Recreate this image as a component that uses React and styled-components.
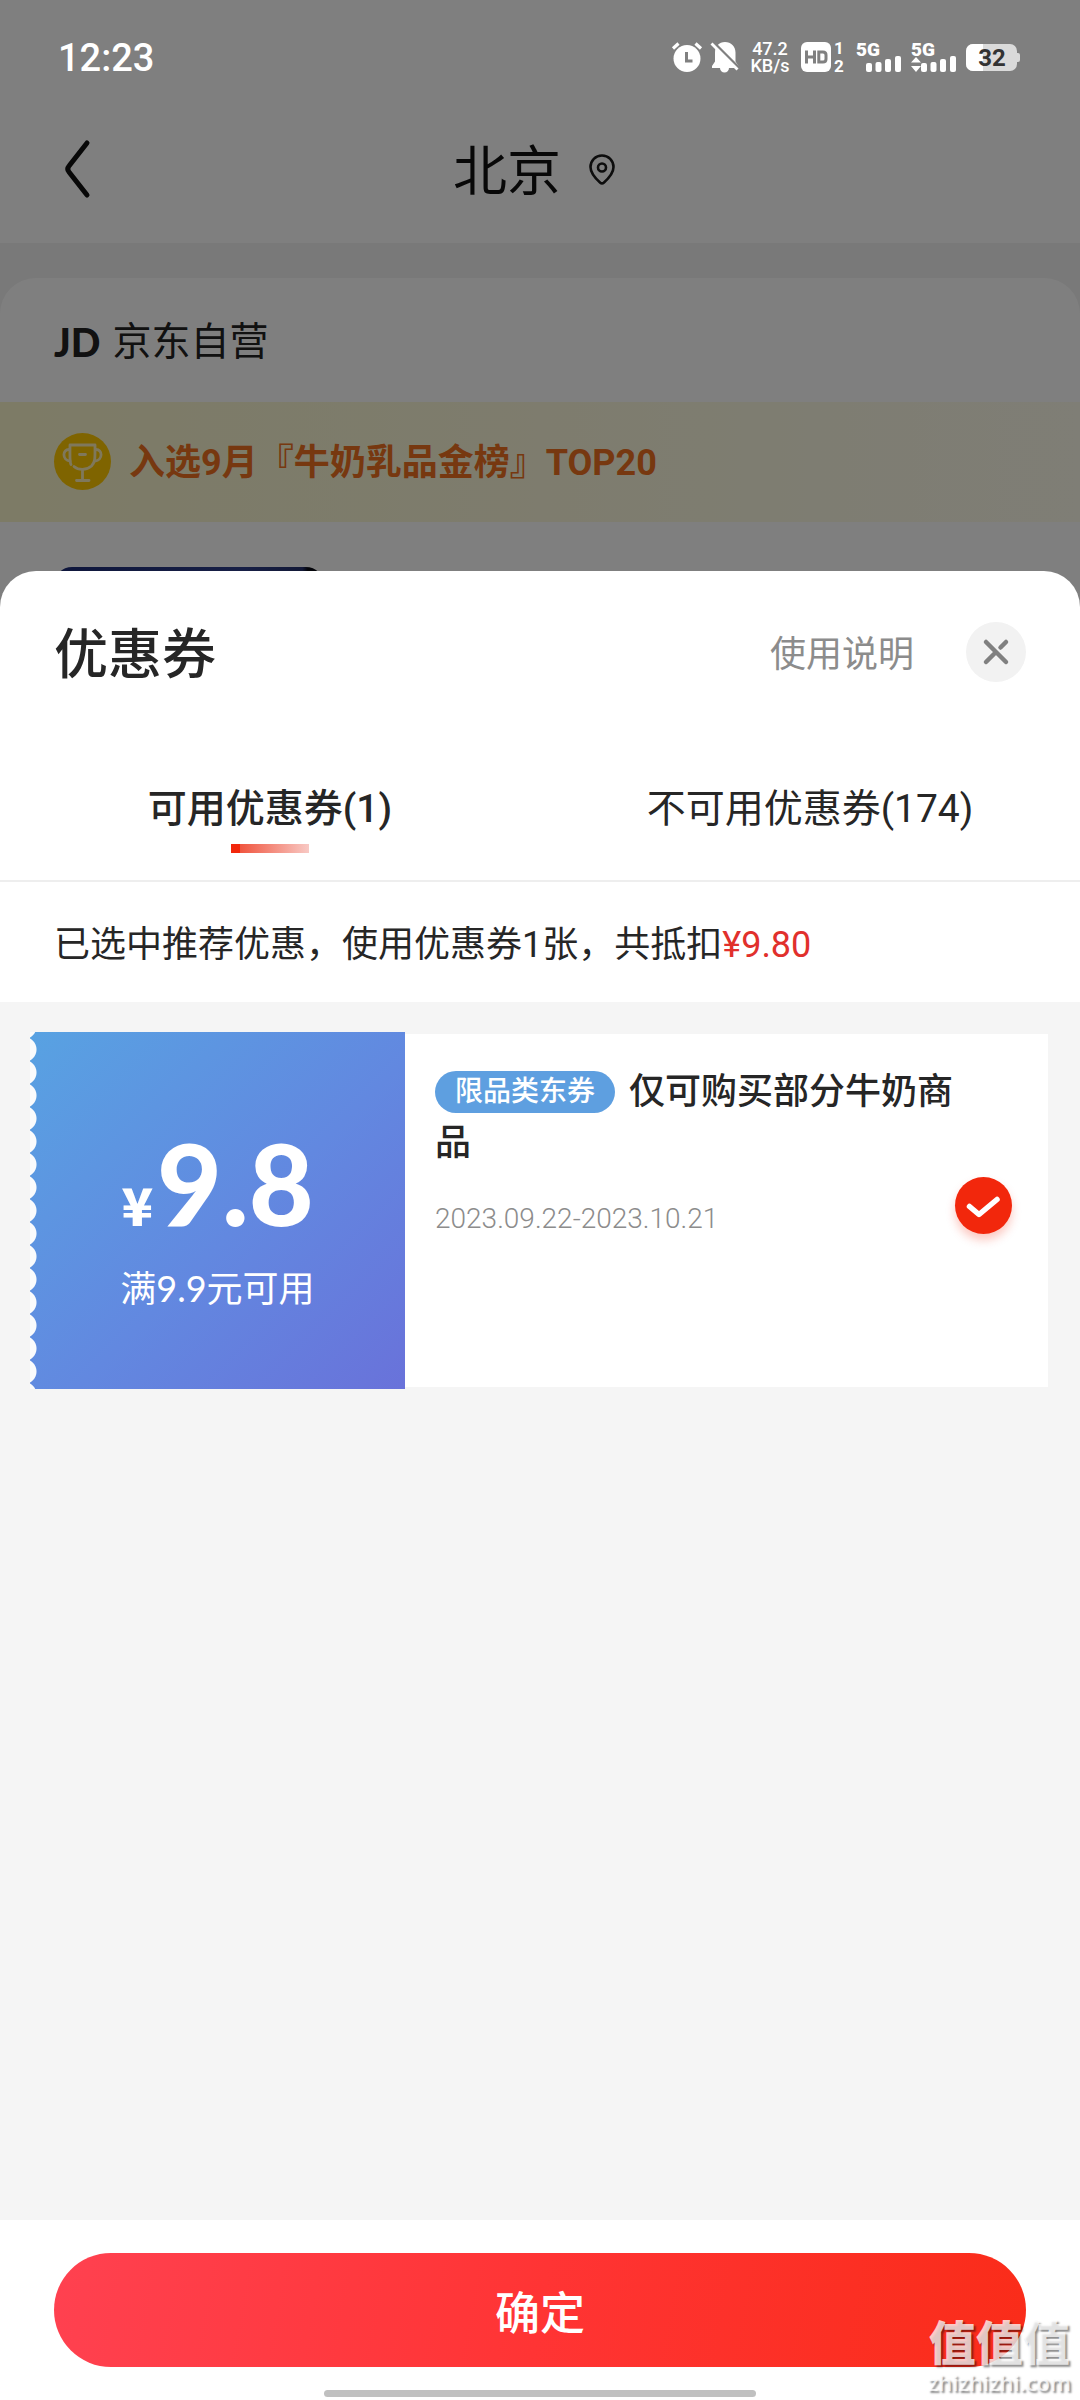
import React, { useState } from 'react';
import styled, { createGlobalStyle } from 'styled-components';

const GlobalStyle = createGlobalStyle`
  * {
    box-sizing: border-box;
  }

  body {
    margin: 0;
    background: #fff;
    color: #262626;
    font-family: Roboto, "Noto Sans CJK SC", sans-serif;
  }

  button {
    padding: 0;
    border: none;
    background: none;
    color: inherit;
    font: inherit;
    cursor: pointer;
  }

  svg {
    flex: none;
    overflow: visible;
  }
`;

const Screen = styled.div`
  position: relative;
  display: flex;
  flex-direction: column;
  min-height: 100vh;
`;

/* ---------- store page behind the sheet ---------- */

const StorePage = styled.div`
  position: relative;
  background: #f3f3f3;
`;

const Mask = styled.div`
  position: absolute;
  inset: 0;
  background: rgba(0, 0, 0, 0.5);
`;

const StatusBar = styled.div`
  position: relative;
  z-index: 1;
  display: flex;
  align-items: center;
  justify-content: space-between;
  height: 114px;
  padding: 0 60px 0 58px;
  color: #fff;
`;

const Clock = styled.time`
  padding-top: 2px;
  font-size: 38px;
  font-weight: 500;
  line-height: 48px;
`;

const StatusIcons = styled.div`
  display: flex;
  align-items: center;
  gap: 9px;
`;

const NetSpeed = styled.div`
  width: 44px;
  font-size: 18px;
  font-weight: 500;
  line-height: 17px;
  text-align: center;
`;

const TopArea = styled.div`
  background: #fff;
`;

const NavBar = styled.header`
  display: grid;
  grid-template-columns: 120px 1fr 120px;
  align-items: center;
  height: 129px;
  padding-bottom: 18px;
`;

const BackButton = styled.button`
  display: flex;
  padding-left: 64px;
`;

const City = styled.h1`
  display: flex;
  align-items: center;
  justify-content: center;
  gap: 28px;
  margin: 0;
  padding-right: 12px;
  color: #111;
  font-size: 54px;
  font-weight: 400;
  line-height: 72px;
`;

const CityName = styled.span`
  padding-top: 6px;
`;

const StoreCard = styled.section`
  margin-top: 35px;
  border-radius: 36px 36px 0 0;
  background: #fff;
`;

const StoreName = styled.h2`
  display: flex;
  align-items: center;
  gap: 12px;
  margin: 0;
  padding: 4px 54px 0;
  height: 124px;
  color: #222;
  font-size: 39px;
  font-weight: 400;
  line-height: 52px;
`;

const JdLogo = styled.span`
  font-family: Lato, sans-serif;
  font-weight: 900;
`;

const RankBanner = styled.div`
  display: flex;
  align-items: center;
  gap: 18px;
  height: 120px;
  padding: 0 54px 2px;
  background: linear-gradient(90deg, #faf6cc, #fefcec);
  color: #ee7020;
  font-size: 36px;
  font-weight: 700;
  line-height: 48px;
`;

const RankText = styled.span`
  padding-top: 4px;
`;

const ProductRow = styled.div`
  padding: 45px 54px 0;
`;

const ProductImage = styled.div`
  width: 270px;
  height: 40px;
  border-radius: 18px 18px 0 0;
  background: linear-gradient(90deg, #1d2c78, #2f3f8c 70%, #26326e 92%, #080a14 94%);
`;

/* ---------- coupon sheet ---------- */

const Sheet = styled.section`
  position: relative;
  z-index: 2;
  flex: 1;
  display: flex;
  flex-direction: column;
  margin-top: -36px;
  border-radius: 36px 36px 0 0;
  background: #fff;
`;

const SheetHeader = styled.div`
  display: flex;
  align-items: center;
  height: 162px;
  padding: 0 54px;
`;

const SheetTitle = styled.h2`
  flex: 1;
  margin: 0;
  padding-top: 8px;
  font-size: 54px;
  font-weight: 500;
  line-height: 72px;
`;

const HelpLink = styled.a`
  margin-right: 52px;
  padding-top: 6px;
  color: #8c8c8c;
  font-size: 36px;
  line-height: 48px;
  text-decoration: none;
`;

const CloseButton = styled.button`
  display: flex;
  align-items: center;
  justify-content: center;
  width: 60px;
  height: 60px;
  border-radius: 50%;
  background: #f2f2f2;
`;

const Tabs = styled.div`
  display: grid;
  grid-template-columns: 1fr 1fr;
  height: 149px;
  border-bottom: 2px solid #eee;
`;

const Tab = styled.button`
  display: flex;
  flex-direction: column;
  align-items: center;
  gap: 8px;
  padding-top: 49px;
  font-size: 39px;
  font-weight: ${props => (props.$active ? 500 : 400)};
  line-height: 54px;
`;

const TabLine = styled.span`
  width: 78px;
  height: 9px;
  background: linear-gradient(90deg, #f2270c 9px, #f0553f 9px, #f8c9c4);
`;

const Notice = styled.p`
  margin: 0;
  padding: 39px 54px 33px;
  font-size: 36px;
  line-height: 48px;
`;

const Amount = styled.span`
  color: #e1302c;
`;

const CouponList = styled.ul`
  flex: 1;
  margin: 0;
  padding: 30px 32px 30px 30px;
  background: #f5f5f5;
  list-style: none;
`;

const Coupon = styled.li`
  display: flex;
  min-height: 357px;
`;

const CouponValue = styled.div`
  flex: none;
  display: flex;
  flex-direction: column;
  align-items: center;
  justify-content: center;
  width: 375px;
  padding-top: 14px;
  background:
    radial-gradient(circle 13px at -6px 50%, #fafbfc 12px, transparent 13px) 0 50% / 375px 23px repeat-y,
    linear-gradient(135deg, #58a2e2, #6288e0 55%, #6972da);
  color: #fff;
`;

const Price = styled.div`
  display: flex;
  align-items: baseline;
  gap: 4px;
  font-family: Lato, sans-serif;
  font-size: 112px;
  font-weight: 900;
  line-height: 120px;
`;

const Currency = styled.span`
  font-family: "Noto Sans CJK SC", sans-serif;
  font-size: 52px;
`;

const Condition = styled.div`
  font-family: Lato, "Noto Sans CJK SC", sans-serif;
  font-size: 36px;
  line-height: 48px;
`;

const CouponBody = styled.label`
  flex: 1;
  display: flex;
  align-items: center;
  margin: 2px 0;
  padding: 0 36px 0 30px;
  background: #fff;
  cursor: pointer;
`;

const CouponText = styled.div`
  flex: 1;
  align-self: flex-start;
  padding-top: 33px;
`;

const CouponTitle = styled.div`
  font-size: 36px;
  font-weight: 500;
  line-height: 51px;
`;

const Badge = styled.span`
  display: inline-block;
  margin-right: 14px;
  padding: 0 20px;
  border-radius: 21px;
  background: #5e9fe0;
  color: #fff;
  font-size: 28px;
  font-weight: 500;
  line-height: 42px;
  vertical-align: 3px;
`;

const ValidDate = styled.div`
  margin-top: 30px;
  color: #8c8c8c;
  font-size: 28px;
  font-weight: 300;
  line-height: 39px;
`;

const RoundCheck = styled.input`
  appearance: none;
  flex: none;
  width: 57px;
  height: 57px;
  margin: 0;
  border: 3px solid #ccc;
  border-radius: 50%;
  background: #fff;
  cursor: pointer;

  &:checked {
    border: none;
    background: #f2270c;
    box-shadow: 0 6px 10px rgba(242, 39, 12, 0.25);
  }
`;

const CheckWrap = styled.span`
  position: relative;
  display: flex;
  margin-top: -10px;

  svg {
    position: absolute;
    inset: 0;
    pointer-events: none;
  }
`;

const Footer = styled.footer`
  display: flex;
  flex-direction: column;
  align-items: center;
  gap: 23px;
  padding: 33px 54px 3px;
  background: #fff;
`;

const ConfirmButton = styled.button`
  width: 100%;
  height: 114px;
  border-radius: 57px;
  background: linear-gradient(100deg, #ff4150, #ff3434 50%, #fa2c19);
  color: #fff;
  font-size: 45px;
  font-weight: 500;
`;

const HomeBar = styled.div`
  width: 432px;
  height: 7px;
  border-radius: 4px;
  background: #c0c0c0;
`;

const Watermark = styled.div`
  position: absolute;
  right: 9px;
  bottom: 6px;
  z-index: 3;
  color: rgba(255, 255, 255, 0.75);
  text-align: center;
  text-shadow: 2px 2px 2px rgba(0, 0, 0, 0.45);
  pointer-events: none;
`;

const WatermarkName = styled.div`
  font-size: 47px;
  font-weight: 900;
  line-height: 52px;
`;

const WatermarkSite = styled.div`
  font-family: "Open Sans", sans-serif;
  font-size: 22px;
  font-weight: 600;
  line-height: 24px;
`;

/* ---------- icons ---------- */

const AlarmIcon = () => (
  <svg width="30" height="30" viewBox="0 0 30 30" fill="none">
    <circle cx="15" cy="16.5" r="13.5" fill="#fff" />
    <path d="M1 6.500 6.500 1.500M29 6.500 23.500 1.500" stroke="#fff" strokeWidth="3.200" />
    <path d="M14.500 10v9h6" stroke="#808080" strokeWidth="3" />
  </svg>
);

const MutedIcon = () => (
  <svg width="28" height="30" viewBox="0 0 28 30">
    <path d="M14 0c6 0 10.500 4.500 10.500 10.500v9l3 4.500v2H18a4.500 4.500 0 0 1-9 0H1v-2l3-4.500v-9C4 4.500 8 0 14 0z" fill="#fff" />
    <path d="M2 0 29 27" stroke="#808080" strokeWidth="3" />
    <path d="M.5 1.500 26.500 27.500" stroke="#fff" strokeWidth="2.800" />
  </svg>
);

const HdIcon = () => (
  <svg width="46" height="30" viewBox="0 0 46 30" fontFamily="Roboto, sans-serif">
    <rect width="30" height="30" rx="6" fill="#fff" />
    <path d="M5.500 8.500v13M13.500 8.500v13M5.500 15h8M17.800 10h4.200q3 0 3 3v4q0 3-3 3h-4.200z" stroke="#808080" strokeWidth="3" fill="none" />
    <text x="33" y="12" fontSize="17" fontWeight="700" fill="#fff">1</text>
    <text x="33" y="30" fontSize="17" fontWeight="700" fill="#fff">2</text>
  </svg>
);

const SignalIcon = ({ arrows }) => (
  <svg width="46" height="30" viewBox="0 0 46 30" fill="#fff">
    <text x="0" y="14" fontSize="19" fontWeight="900" fontFamily="Roboto, sans-serif">5G</text>
    {arrows && <path d="M0 20.500 5 15l5 5.500zM0 24h10l-5 6z" />}
    <rect x="10" y="21" width="6" height="9" rx="2" />
    <rect x="19.500" y="20" width="6" height="10" rx="2" />
    <rect x="29" y="17" width="6" height="13" rx="2" />
    <rect x="39" y="14" width="6" height="16" rx="2" />
  </svg>
);

const BatteryIcon = ({ level }) => (
  <svg width="54" height="27" viewBox="0 0 54 27">
    <rect width="51" height="27" rx="7" fill="#dadada" />
    <path d="M51 9h1q2 0 2 2v5q0 2-2 2h-1z" fill="#dadada" />
    <path d="M7 0h10v27H7a7 7 0 0 1-7-7V7a7 7 0 0 1 7-7z" fill="#fff" />
    <text x="26" y="22" textAnchor="middle" fontSize="24" fontWeight="700" fontFamily="Roboto, sans-serif" fill="#333">{level}</text>
  </svg>
);

const ChevronIcon = () => (
  <svg width="28" height="60" viewBox="0 0 28 60" fill="none" stroke="#111" strokeWidth="5" strokeLinecap="round" strokeLinejoin="round">
    <path d="M23 3 5 26q-2.500 3 0 6l18 23" />
  </svg>
);

const PinIcon = () => (
  <svg width="26" height="32" viewBox="0 0 26 32" fill="none" stroke="#1a1a1a" strokeWidth="2.600">
    <path d="M13 1.500c6.500 0 11.500 5 11.500 11.500 0 6-4 10.500-9.500 15.500q-2 1.800-4 0C5.500 23.500 1.500 19 1.500 13 1.500 6.500 6.500 1.500 13 1.500z" strokeLinejoin="round" />
    <circle cx="13" cy="13.500" r="4" />
  </svg>
);

const TrophyIcon = () => (
  <svg width="57" height="57" viewBox="0 0 57 57" fill="none">
    <circle cx="28.500" cy="28.500" r="28.500" fill="#ffc800" />
    <g stroke="#fff0b8" strokeWidth="2.800" strokeLinecap="round" strokeLinejoin="round">
      <path d="M17 31.500C15.500 29 16 25 16 12h25c0 13 .5 17-3.500 21-5 4.500-13 4.500-17.500.5" />
      <path d="M15.500 16.500C8 16 8 27 16 28M41.500 16.500C49 16 49 27 41 28M28.500 37v10M22.500 47.500h12.500M25.500 21.500h6" />
    </g>
  </svg>
);

const CloseIcon = () => (
  <svg width="26" height="26" viewBox="0 0 26 26" stroke="#808080" strokeWidth="4.500" strokeLinecap="round">
    <path d="M3 3l20 20M3 23l10-10M17.500 8.500 23 3" />
  </svg>
);

const CheckIcon = () => (
  <svg width="57" height="57" viewBox="0 0 57 57" fill="none" stroke="#fff" strokeWidth="5.500" strokeLinecap="round" strokeLinejoin="round">
    <path d="M14.500 29.500l9.500 8L42 22.500" />
  </svg>
);

const tabs = [
  { id: 'usable', label: '可用优惠券(1)' },
  { id: 'unusable', label: '不可用优惠券(174)' },
];

const App = () => {
  const [tab, setTab] = useState('usable');
  const [checked, setChecked] = useState(true);

  return (
    <>
      <GlobalStyle />
      <Screen>
        <StorePage>
          <Mask />
          <TopArea>
            <StatusBar>
              <Clock>12:23</Clock>
              <StatusIcons>
                <AlarmIcon />
                <MutedIcon />
                <NetSpeed>47.2 KB/s</NetSpeed>
                <HdIcon />
                <SignalIcon />
                <SignalIcon arrows />
                <BatteryIcon level={32} />
              </StatusIcons>
            </StatusBar>
            <NavBar>
              <BackButton aria-label="返回"><ChevronIcon /></BackButton>
              <City><CityName>北京</CityName><PinIcon /></City>
            </NavBar>
          </TopArea>
          <StoreCard>
            <StoreName><JdLogo>JD</JdLogo>京东自营</StoreName>
            <RankBanner>
              <TrophyIcon />
              <RankText>入选9月『牛奶乳品金榜』TOP20</RankText>
            </RankBanner>
            <ProductRow>
              <ProductImage />
            </ProductRow>
          </StoreCard>
        </StorePage>

        <Sheet>
          <SheetHeader>
            <SheetTitle>优惠券</SheetTitle>
            <HelpLink href="#help">使用说明</HelpLink>
            <CloseButton aria-label="关闭"><CloseIcon /></CloseButton>
          </SheetHeader>
          <Tabs role="tablist">
            {tabs.map(({ id, label }) => (
              <Tab key={id} role="tab" aria-selected={tab === id} $active={tab === id} onClick={() => setTab(id)}>
                {label}
                {tab === id && <TabLine />}
              </Tab>
            ))}
          </Tabs>
          <Notice>
            已选中推荐优惠，使用优惠券1张，共抵扣<Amount>¥9.80</Amount>
          </Notice>
          <CouponList>
            <Coupon>
              <CouponValue>
                <Price><Currency>¥</Currency>9.8</Price>
                <Condition>满9.9元可用</Condition>
              </CouponValue>
              <CouponBody>
                <CouponText>
                  <CouponTitle><Badge>限品类东券</Badge>仅可购买部分牛奶商品</CouponTitle>
                  <ValidDate>2023.09.22-2023.10.21</ValidDate>
                </CouponText>
                <CheckWrap>
                  <RoundCheck type="checkbox" checked={checked} onChange={e => setChecked(e.target.checked)} />
                  {checked && <CheckIcon />}
                </CheckWrap>
              </CouponBody>
            </Coupon>
          </CouponList>
          <Footer>
            <ConfirmButton>确定</ConfirmButton>
            <HomeBar />
          </Footer>
        </Sheet>

        <Watermark>
          <WatermarkName>值值值</WatermarkName>
          <WatermarkSite>zhizhizhi.com</WatermarkSite>
        </Watermark>
      </Screen>
    </>
  );
};

export default App;
